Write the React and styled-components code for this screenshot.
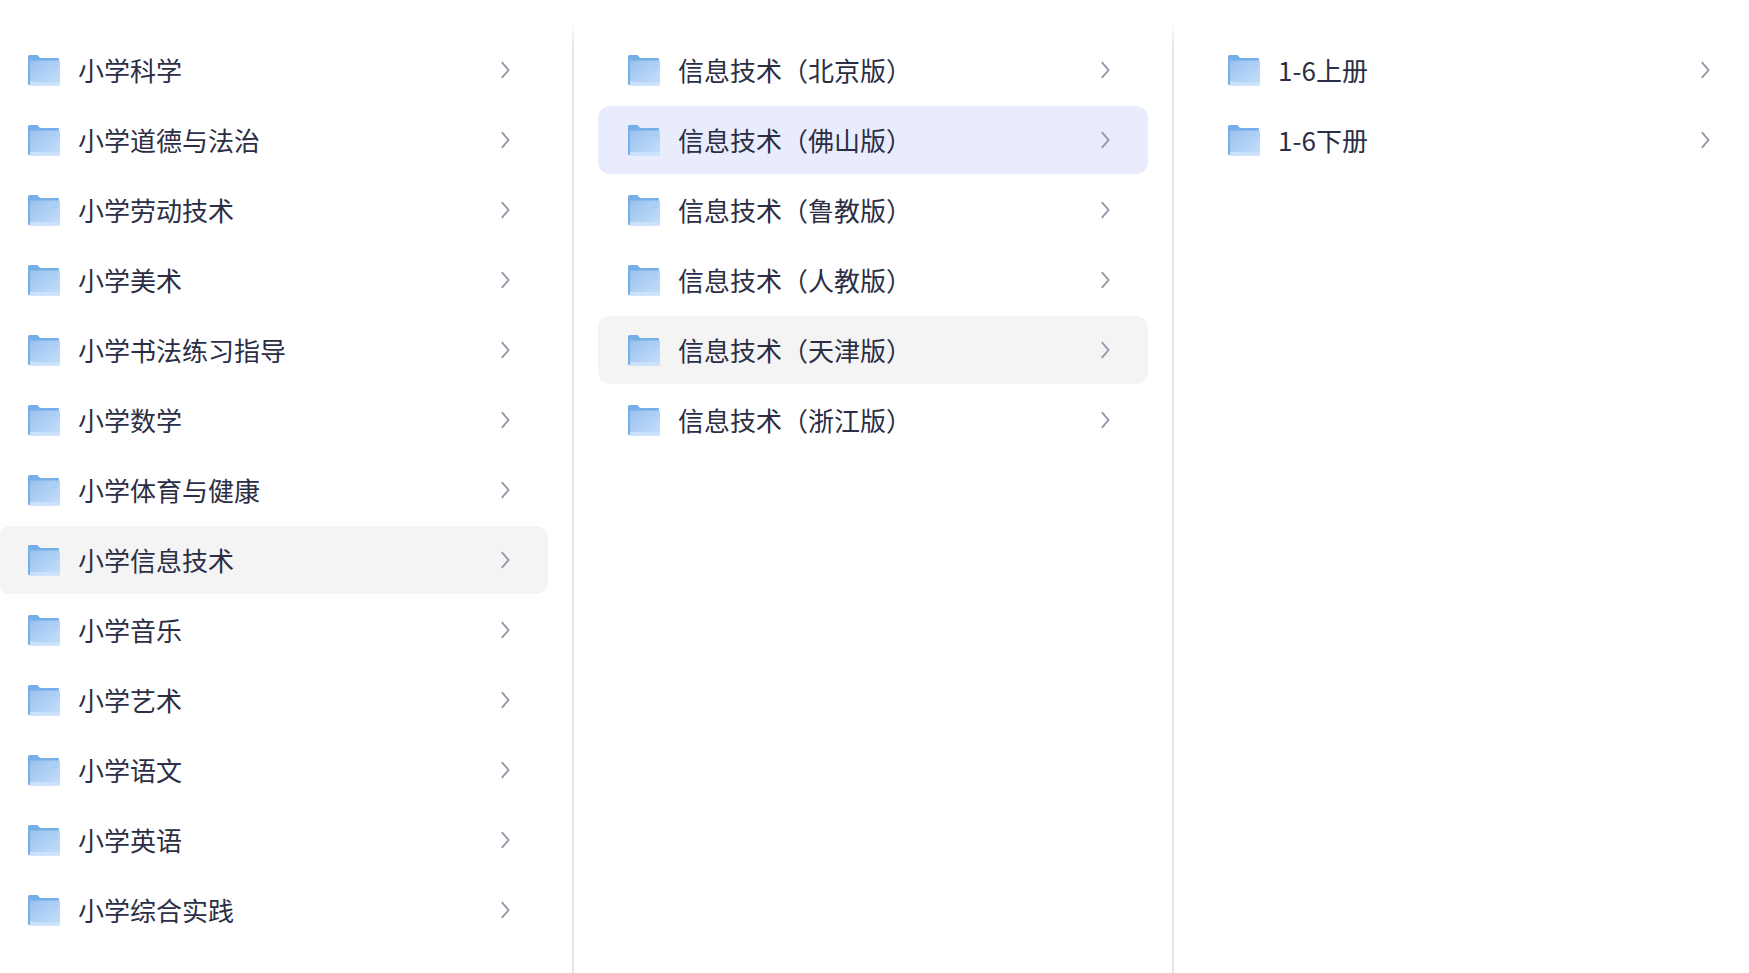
import React from "react";
import styled, { createGlobalStyle } from "styled-components";

const Global = createGlobalStyle`
  html, body { margin: 0; padding: 0; background: #fff; height: 100%; overflow: hidden; }
  #root { height: 100%; }
`;
const Page = styled.div`
  display: flex;
  width: 1749px;
  height: 973px;
  overflow: hidden;
  font-family: "Noto Sans CJK SC", "Noto Sans", sans-serif;
`;
const Column = styled.section`
  position: relative;
  flex: 0 0 ${(p) => p.$width}px;
  box-sizing: border-box;
  padding: 36px 0 0 ${(p) => p.$left}px;
  display: flex;
  flex-direction: column;
  gap: 2px;
  &::after {
    content: "";
    display: ${(p) => (p.$divider ? "block" : "none")};
    position: absolute;
    top: 24px;
    bottom: 0;
    right: 0;
    width: 2px;
    background: linear-gradient(to bottom, #ffffff 0, #e4e4e6 24px);
  }
`;
const Row = styled.div`
  flex: 0 0 68px;
  width: 550px;
  box-sizing: border-box;
  display: flex;
  align-items: center;
  padding-left: 29px;
  padding-right: 36px;
  border-radius: 12px;
  background: ${(p) => (p.$state === "selected" ? "#e9ecfd" : p.$state === "hover" ? "#f4f4f5" : "transparent")};
`;
const FirstRow = styled(Row)`
  margin-left: -2px;
`;
const Label = styled.span`
  flex: 1;
  margin-left: 17px;
  font-size: 26px;
  line-height: 36px;
  color: #2b2e44;
  white-space: nowrap;
`;
const Chevron = styled.svg`
  width: 14px;
  height: 20px;
  flex: none;
  fill: none;
  stroke: #9797a7;
  stroke-width: 1.9;
`;
const FolderSvg = styled.svg`
  width: 34px;
  height: 32px;
  flex: none;
`;

function Folder({ id }) {
  return (
    <FolderSvg viewBox="0 0 34 32">
      <defs>
        <linearGradient id={id} x1="0" y1="0" x2="1" y2="1">
          <stop offset="0" stopColor="#98c1ef" />
          <stop offset="1" stopColor="#c6dffa" />
        </linearGradient>
      </defs>
      <path d="M1 2.5 Q1 1 2.5 1 H10.5 L13 4 H31 Q32 4 32 5 V10 H1 Z" fill="#76aee8" />
      <path d="M1 8 H3 V31 H2 Q1 31 1 30 Z" fill="#76aee8" />
      <path d="M3 6.5 H32 Q33 6.5 33 7.5 V30 Q33 31.5 31.5 31.5 H3 Z" fill={`url(#${id})`} />
      <path d="M3 28 H33 V30 Q33 31.5 31.5 31.5 H3 Z" fill="#c9e1fa" />
      <path d="M26 11.5 H30 M26 13.5 H30" stroke="#a3c8f0" strokeWidth="0.9" />
    </FolderSvg>
  );
}

const columns = [
  {
    width: 574, left: 0, divider: true,
    items: ["小学科学", "小学道德与法治", "小学劳动技术", "小学美术", "小学书法练习指导", "小学数学", "小学体育与健康", ["小学信息技术", "hover"], "小学音乐", "小学艺术", "小学语文", "小学英语", "小学综合实践"],
  },
  {
    width: 600, left: 24, divider: true,
    items: ["信息技术（北京版）", ["信息技术（佛山版）", "selected"], "信息技术（鲁教版）", "信息技术（人教版）", ["信息技术（天津版）", "hover"], "信息技术（浙江版）"],
  },
  { width: 575, left: 24, divider: false, items: ["1-6上册", "1-6下册"] },
];

export default function App() {
  return (
    <Page>
      <Global />
      {columns.map((c, ci) => (
        <Column key={ci} $width={c.width} $left={c.left} $divider={c.divider}>
          {c.items.map((it, i) => {
            const [text, state] = Array.isArray(it) ? it : [it];
            const R = ci === 0 ? FirstRow : Row;
            return (
              <R key={i} $state={state}>
                <Folder id={`g${ci}-${i}`} />
                <Label>{text}</Label>
                <Chevron viewBox="0 0 14 20">
                  <path d="M3.8 2.2 L10.5 10 L3.8 17.8" />
                </Chevron>
              </R>
            );
          })}
        </Column>
      ))}
    </Page>
  );
}
